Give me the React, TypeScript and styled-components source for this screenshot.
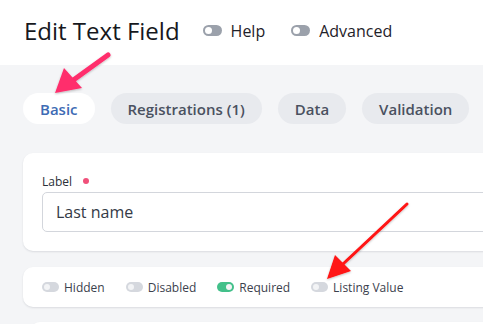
import React from 'react'
import styled, { createGlobalStyle } from 'styled-components'

const GlobalStyle = createGlobalStyle`
  html, body {
    margin: 0;
    padding: 0;
    background: #f4f5f7;
    overflow: hidden;
    font-family: 'Open Sans', 'Noto Sans', sans-serif;
  }
`

const Page = styled.div`
  position: relative;
  width: 483px;
  height: 324px;
  overflow: hidden;
`

const Header = styled.header`
  display: flex;
  align-items: center;
  height: 65px;
  padding: 0 0 4px 24px;
  box-sizing: border-box;
  background: #ffffff;
`

const Title = styled.h1`
  margin: 0 23px 0 0;
  font-size: 24px;
  font-weight: 400;
  color: #16181d;
`

const Switch = styled.span<{ $on?: boolean; $tone?: 'dark' | 'light'; $size?: 'md' | 'sm' }>`
  position: relative;
  display: inline-block;
  flex: none;
  width: ${p => (p.$size === 'sm' ? 17 : 19)}px;
  height: ${p => (p.$size === 'sm' ? 10 : 11)}px;
  border-radius: 6px;
  background: ${p => (p.$on ? '#43c08a' : p.$tone === 'dark' ? '#9ba1ab' : '#d5d8de')};

  &::after {
    content: '';
    position: absolute;
    top: 2px;
    left: ${p => (p.$on ? 'auto' : '2px')};
    right: ${p => (p.$on ? '2px' : 'auto')};
    width: ${p => (p.$size === 'sm' ? 6 : 7)}px;
    height: ${p => (p.$size === 'sm' ? 6 : 7)}px;
    border-radius: 50%;
    background: ${p => (p.$tone === 'dark' ? '#ffffff' : '#f3f4f6')};
  }
`

const HeaderToggle = styled.label`
  display: flex;
  align-items: center;
  gap: 9px;
  margin-right: 26px;
  font-size: 16px;
  color: #1f2229;
`

const Main = styled.main`
  width: 560px;
  padding: 28px 0 0 23px;
`

const Tabs = styled.nav`
  display: flex;
  gap: 16px;
`

const Tab = styled.button<{ $active?: boolean }>`
  height: 31px;
  padding: 0 17px;
  border: none;
  border-radius: 16px;
  font-family: inherit;
  font-size: 15px;
  font-weight: 600;
  background: ${p => (p.$active ? '#ffffff' : '#e8eaee')};
  color: ${p => (p.$active ? '#3e6bb4' : '#4a5160')};
`

const Card = styled.section`
  background: #ffffff;
  border-radius: 10px;
  box-shadow: 0 1px 2px rgba(30, 40, 60, 0.12);
`

const FieldCard = styled(Card)`
  margin-top: 29px;
  padding: 20px 19px 19px;
`

const LabelRow = styled.div`
  display: flex;
  align-items: center;
  gap: 11px;
  height: 16px;
  margin-bottom: 3px;
  font-size: 12px;
  color: #2a2f38;
`

const Dot = styled.span`
  width: 6px;
  height: 6px;
  border-radius: 50%;
  background: #f0507a;
`

const Input = styled.input`
  display: block;
  width: 100%;
  height: 40px;
  box-sizing: border-box;
  padding: 0 13px;
  border: 1px solid #d3d6dc;
  border-radius: 5px;
  font-family: inherit;
  font-size: 16px;
  color: #343a46;
  outline: none;
`

const OptionsCard = styled(Card)`
  display: flex;
  align-items: center;
  gap: 21px;
  height: 40px;
  margin-top: 16px;
  padding: 0 19px;
`

const Option = styled.label`
  display: flex;
  align-items: center;
  gap: 5px;
  font-size: 12px;
  color: #3b414d;
`

const NextCard = styled(Card)`
  height: 40px;
  margin: 15px 0 0 7px;
`

const Overlay = styled.svg`
  position: absolute;
  left: 0;
  top: 0;
  pointer-events: none;
`

const options = [
  { label: 'Hidden', on: false },
  { label: 'Disabled', on: false },
  { label: 'Required', on: true },
  { label: 'Listing Value', on: false },
]

const tabs = ['Basic', 'Registrations (1)', 'Data', 'Validation']

export default function App() {
  return (
    <Page>
      <GlobalStyle />
      <Header>
        <Title>Edit Text Field</Title>
        <HeaderToggle>
          <Switch $tone="dark" />
          Help
        </HeaderToggle>
        <HeaderToggle>
          <Switch $tone="dark" />
          Advanced
        </HeaderToggle>
      </Header>
      <Main>
        <Tabs>
          {tabs.map((t, i) => (
            <Tab key={t} $active={i === 0}>{t}</Tab>
          ))}
        </Tabs>
        <FieldCard>
          <LabelRow>
            Label
            <Dot />
          </LabelRow>
          <Input defaultValue="Last name" />
        </FieldCard>
        <OptionsCard>
          {options.map(o => (
            <Option key={o.label}>
              <Switch $size="sm" $on={o.on} />
              {o.label}
            </Option>
          ))}
        </OptionsCard>
        <NextCard />
      </Main>
      <Overlay width="483" height="324" viewBox="0 0 483 324">
        <defs>
          <filter id="sh" x="-20%" y="-20%" width="140%" height="140%">
            <feDropShadow dx="0" dy="1" stdDeviation="1" floodColor="#000" floodOpacity="0.25" />
          </filter>
        </defs>
        <g filter="url(#sh)">
          <line x1="108" y1="55" x2="72" y2="81" stroke="#ff2d6c" strokeWidth="5" strokeLinecap="round" />
          <polygon points="55,93 64,68 82,88" fill="#ff2d6c" />
        </g>
        <g filter="url(#sh)">
          <line x1="407" y1="204" x2="343" y2="264" stroke="#ff1212" strokeWidth="3" strokeLinecap="round" />
          <polygon points="327,279 335,255 351,271" fill="#ff1212" />
        </g>
      </Overlay>
    </Page>
  )
}
